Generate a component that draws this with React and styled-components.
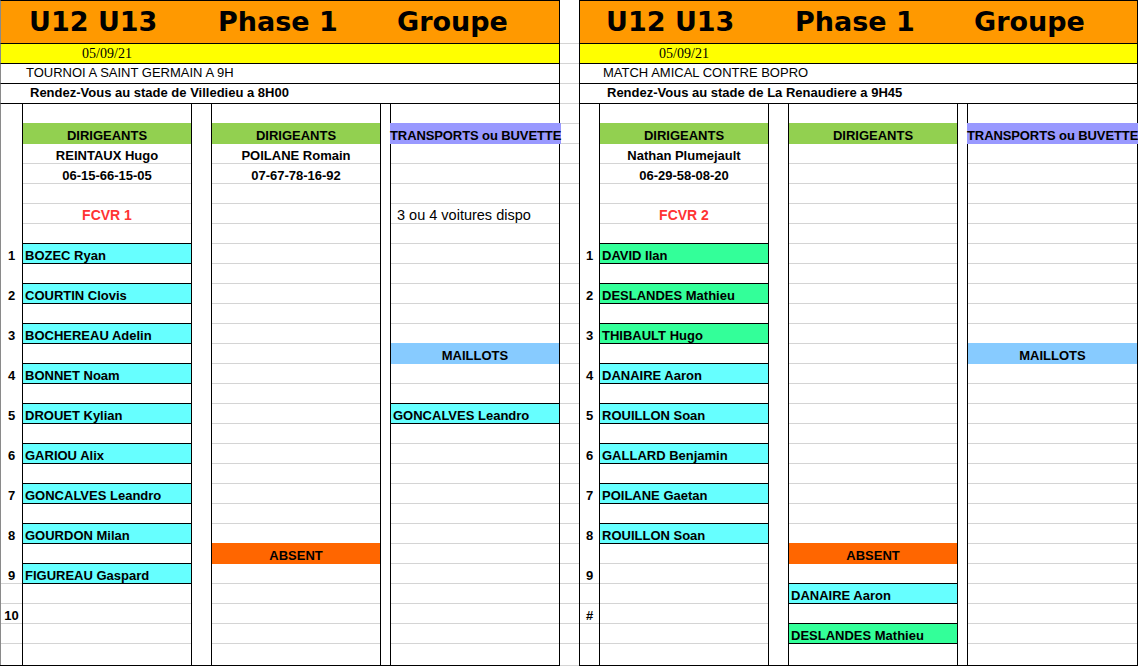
import React from "react";
import styled, { createGlobalStyle } from "styled-components";

const GRID = "#d4d4d4";
const CYAN = "#66ffff";
const MINT = "#33ff99";
const GREEN = "#92d050";
const PURPLE = "#9999ff";
const SKY = "#87cbff";
const ORANGE = "#ff6600";
const ROWS = 28;

const GlobalStyle = createGlobalStyle`
  html, body {
    margin: 0;
    padding: 0;
    background: #fff;
    overflow: hidden;
  }
  body {
    font-family: "Liberation Sans", Arial, sans-serif;
    color: #000;
  }
`;

const Sheet = styled.div`
  display: flex;
  align-items: flex-start;
  width: 1138px;
  height: 667px;
  overflow: hidden;
`;

const Panel = styled.div`
  display: flex;
  flex-direction: column;
  flex: none;
  width: ${(p) => p.$width}px;
`;

const TitleBar = styled.div`
  box-sizing: border-box;
  height: 44px;
  display: grid;
  grid-template-columns: ${(p) => p.$num - 1}px 189px 179px 1fr;
  align-items: center;
  background: #ff9900;
  border: 1px solid #000;
  border-left-color: ${(p) => p.$edge};
`;

const TitleText = styled.div`
  grid-column: ${(p) => p.$col};
  padding-left: 7px;
  font-family: "DejaVu Sans", "Liberation Sans", sans-serif;
  font-size: 27px;
  font-weight: 700;
  line-height: 40px;
  white-space: nowrap;
`;

const DateBar = styled.div`
  box-sizing: border-box;
  height: 20px;
  display: grid;
  grid-template-columns: ${(p) => p.$num - 1}px 170px 1fr;
  background: #ffff00;
  border: 1px solid #000;
  border-top: none;
  border-left-color: ${(p) => p.$edge};
`;

const DateText = styled.div`
  grid-column: 2;
  text-align: center;
  font-family: "Liberation Serif", "Times New Roman", serif;
  font-size: 14px;
  line-height: 19px;
`;

const InfoRow = styled.div`
  box-sizing: border-box;
  height: 20px;
  border: 1px solid #000;
  border-top: none;
  border-left-color: ${(p) => p.$edge};
  padding-left: ${(p) => p.$indent}px;
  font-size: 13px;
  font-weight: ${(p) => (p.$bold ? 700 : 400)};
  line-height: 18px;
  white-space: nowrap;
`;

const Body = styled.div`
  display: flex;
  border-bottom: 1px solid #000;
`;

const NumCol = styled.div`
  box-sizing: border-box;
  flex: none;
  width: ${(p) => p.$width}px;
  border-left: 1px solid ${(p) => p.$edge};
`;

const Column = styled.div`
  box-sizing: border-box;
  flex: none;
  width: ${(p) => p.$width}px;
  border-left: 1px solid #000;
  border-right: 1px solid #000;
`;

const Spacer = styled.div`
  flex: none;
  width: ${(p) => p.$width}px;
`;

const lineColor = (p) => {
  if (p.$boxed) return "#000";
  if (p.$fill) return p.$fill;
  if (p.$grid) return GRID;
  return "transparent";
};

const Cell = styled.div`
  box-sizing: border-box;
  height: ${(p) => (p.$last ? 21 : 20)}px;
  border-bottom: ${(p) => (p.$last ? "none" : `1px solid ${lineColor(p)}`)};
  background: ${(p) => p.$fill || "transparent"};
  box-shadow: ${(p) =>
    p.$boxed ? "0 -1px 0 #000" : p.$fill ? `0 -1px 0 ${p.$fill}` : "none"};
  padding-top: 4px;
  padding-left: ${(p) => (p.$align === "left" ? p.$pad ?? 2 : 0)}px;
  font-size: ${(p) => p.$size || 13}px;
  font-weight: ${(p) => p.$weight || 700};
  color: ${(p) => p.$color || "#000"};
  text-align: ${(p) => p.$align || "center"};
  line-height: 15px;
  white-space: nowrap;
  ${(p) =>
    p.$bleed &&
    `
    position: relative;
    z-index: 1;
    margin-left: -1px;
    margin-right: -${p.$bleed}px;
    letter-spacing: -0.1px;
  `}
`;

const Gutter = styled.div`
  flex: none;
  width: 19px;
`;

const GutterCell = styled.div`
  box-sizing: border-box;
  height: ${(p) => p.$h}px;
  border-bottom: 1px solid ${(p) => (p.$blank ? "transparent" : GRID)};
`;

const head = (text) => ({ text, fill: GREEN });
const plain = (text) => ({ text });
const team = (text) => ({ text, color: "#ff3333", size: 14 });
const player = (text, fill = CYAN) => ({ text, fill, boxed: true, align: "left" });
const band = (text, fill) => ({ text, fill });

const numbers = (last) => {
  const out = {};
  for (let n = 1; n <= 9; n++) out[5 + n * 2] = String(n);
  out[25] = last;
  return out;
};

const left = {
  width: 560,
  num: 22,
  last: 170,
  edge: "#8a8a8a",
  bleed: 2,
  date: "05/09/21",
  event: "TOURNOI A SAINT GERMAIN A 9H",
  meet: "Rendez-Vous au stade de Villedieu a 8H00",
  numbers: numbers("10"),
  a: {
    1: head("DIRIGEANTS"),
    2: plain("REINTAUX Hugo"),
    3: plain("06-15-66-15-05"),
    5: team("FCVR 1"),
    7: player("BOZEC Ryan"),
    9: player("COURTIN Clovis"),
    11: player("BOCHEREAU Adelin"),
    13: player("BONNET Noam"),
    15: player("DROUET Kylian"),
    17: player("GARIOU Alix"),
    19: player("GONCALVES Leandro"),
    21: player("GOURDON Milan"),
    23: player("FIGUREAU Gaspard"),
  },
  b: {
    1: head("DIRIGEANTS"),
    2: plain("POILANE Romain"),
    3: plain("07-67-78-16-92"),
    22: band("ABSENT", ORANGE),
  },
  c: {
    1: { ...band("TRANSPORTS ou BUVETTE", PURPLE), bleed: true },
    5: { text: "3 ou 4 voitures dispo", weight: 400, size: 14.5, align: "left", pad: 6 },
    12: band("MAILLOTS", SKY),
    15: player("GONCALVES Leandro"),
  },
};

const right = {
  width: 559,
  num: 20,
  last: 171,
  edge: "#000",
  bleed: 1,
  date: "05/09/21",
  event: "MATCH AMICAL CONTRE BOPRO",
  meet: "Rendez-Vous au stade de La Renaudiere a 9H45",
  numbers: numbers("#"),
  a: {
    1: head("DIRIGEANTS"),
    2: plain("Nathan Plumejault"),
    3: plain("06-29-58-08-20"),
    5: team("FCVR 2"),
    7: player("DAVID Ilan", MINT),
    9: player("DESLANDES Mathieu", MINT),
    11: player("THIBAULT Hugo", MINT),
    13: player("DANAIRE Aaron"),
    15: player("ROUILLON Soan"),
    17: player("GALLARD Benjamin"),
    19: player("POILANE Gaetan"),
    21: player("ROUILLON Soan"),
  },
  b: {
    1: head("DIRIGEANTS"),
    22: band("ABSENT", ORANGE),
    24: player("DANAIRE Aaron"),
    26: player("DESLANDES Mathieu", MINT),
  },
  c: {
    1: { ...band("TRANSPORTS ou BUVETTE", PURPLE), bleed: true },
    12: band("MAILLOTS", SKY),
  },
};

const rows = Array.from({ length: ROWS }, (_, i) => i);

const SheetColumn = ({ width, entries, bleed }) => (
  <Column $width={width}>
    {rows.map((i) => {
      const e = entries[i] || {};
      return (
        <Cell
          key={i}
          $last={i === ROWS - 1}
          $grid
          $fill={e.fill}
          $boxed={e.boxed}
          $align={e.align}
          $pad={e.pad}
          $size={e.size}
          $weight={e.weight}
          $color={e.color}
          $bleed={e.bleed ? bleed : 0}
        >
          {e.text}
        </Cell>
      );
    })}
  </Column>
);

const TeamSheet = ({ data }) => (
  <Panel $width={data.width}>
    <TitleBar $num={data.num} $edge={data.edge}>
      <TitleText $col={2}>U12 U13</TitleText>
      <TitleText $col={3}>Phase 1</TitleText>
      <TitleText $col={4}>Groupe</TitleText>
    </TitleBar>
    <DateBar $num={data.num} $edge={data.edge}>
      <DateText>{data.date}</DateText>
    </DateBar>
    <InfoRow $edge={data.edge} $indent={data.num + 3}>
      {data.event}
    </InfoRow>
    <InfoRow $edge={data.edge} $indent={data.num + 7} $bold>
      {data.meet}
    </InfoRow>
    <Body>
      <NumCol $width={data.num} $edge={data.edge}>
        {rows.map((i) => (
          <Cell key={i} $last={i === ROWS - 1} $grid={i >= 23}>
            {data.numbers[i]}
          </Cell>
        ))}
      </NumCol>
      <SheetColumn width={170} entries={data.a} />
      <Spacer $width={19} />
      <SheetColumn width={170} entries={data.b} />
      <Spacer $width={9} />
      <SheetColumn width={data.last} entries={data.c} bleed={data.bleed} />
    </Body>
  </Panel>
);

// gutter between the two sheets: header, date, two info rows, then body rows
const gutterHeights = [44, 20, 20, 20, ...Array(ROWS - 1).fill(20), 22];

export default function App() {
  return (
    <>
      <GlobalStyle />
      <Sheet>
        <TeamSheet data={left} />
        <Gutter>
          {gutterHeights.map((h, i) => (
            <GutterCell key={i} $h={h} $blank={i === 9 || i === 10} />
          ))}
        </Gutter>
        <TeamSheet data={right} />
      </Sheet>
    </>
  );
}
